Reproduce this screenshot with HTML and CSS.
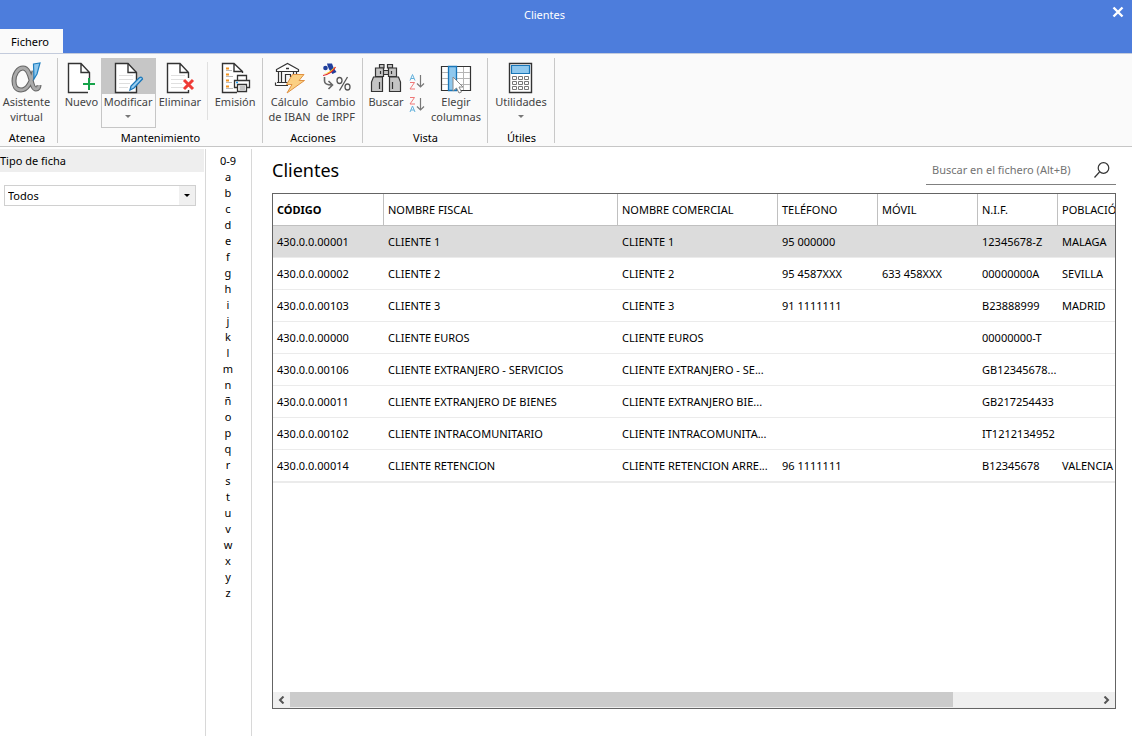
FILE: index.html
```html
<!DOCTYPE html>
<html lang="es">
<head>
<meta charset="utf-8">
<title>Clientes</title>
<link rel="stylesheet" href="styles.css">
</head>
<body>
<header class="titlebar">
  <h1 class="window-title">Clientes</h1>
  <button class="close" aria-label="Cerrar"><svg width="12" height="12" viewBox="0 0 12 12"><path d="M1.5 1.5l9 9M10.5 1.5l-9 9" stroke="#fff" stroke-width="2.4"/></svg></button>
  <button class="tab">Fichero</button>
</header>
<nav class="ribbon" aria-label="Cinta de opciones">
  <section class="group g-atenea">
    <div class="tools">
      <button class="tool">
        <svg width="32" height="32" viewBox="0 0 32 32"><path d="M23 9C20 22 16 28 10 28C5 28 3 24 3 19C3 12 7 6 12 6C21 6 19 27 25 27C27 27 28 25 28 23" fill="none" stroke="#666" stroke-width="5"/><path d="M23 9C20 22 16 28 10 28C5 28 3 24 3 19C3 12 7 6 12 6C21 6 19 27 25 27C27 27 28 25 28 23" fill="none" stroke="#aaa" stroke-width="2.8"/><path d="M22.500 2L29 1L26 12L23 17Z" fill="#8ec7ed" stroke="#1f7fc0" stroke-width="1.2"/></svg>
        <span>Asistente<br>virtual</span>
      </button>
    </div>
    <h2 class="group-name">Atenea</h2>
  </section>
  <section class="group g-mant">
    <div class="tools">
      <button class="tool w-nuevo">
        <svg width="32" height="32" viewBox="0 0 32 32"><path d="M24.500 20V10.500L16 1.500H3.500V30.500H23M16 1.500V10.500H24.500" fill="#fff" stroke="#333" stroke-width="1.400"/><path d="M24 16V28M18 22H30" stroke="#16a34a" stroke-width="2"/></svg>
        <span>Nuevo</span>
      </button>
      <button class="tool w-mod selected">
        <svg width="32" height="32" viewBox="0 0 32 32"><path d="M3.500 1.500H16L24.500 10.500V30.500H3.500Z" fill="#fff" stroke="#333" stroke-width="1.400"/><path d="M16 1.500V10.500H24.500" fill="none" stroke="#333" stroke-width="1.400"/><path d="M7 13.500H21M7 17.500H21M7 21.500H18M7 25.500H16" stroke="#dedede"/><path d="M18 28L19 24L27 16Q30 14 30.500 17L22 26Z" fill="#9ccff0" stroke="#1976b8" stroke-width="1.300"/></svg>
        <span>Modificar</span>
        <i class="caret"></i>
      </button>
      <button class="tool w-elim">
        <svg width="32" height="32" viewBox="0 0 32 32"><path d="M24.500 16V10.500L16 1.500H3.500V30.500H24.500V28M16 1.500V10.500H24.500" fill="#fff" stroke="#333" stroke-width="1.400"/><path d="M7 13.500H21M7 17.500H20M7 21.500H18M7 25.500H19" stroke="#e0e0e0"/><path d="M20 18L29 27M29 18L20 27" stroke="#ef3b36" stroke-width="3"/></svg>
        <span>Eliminar</span>
      </button>
      <button class="tool w-emi">
        <svg width="32" height="32" viewBox="0 0 32 32"><path d="M23.500 11V9.500L15 1.500H3.500V30.500H18M15 1.500V9.500H23.500" fill="#fff" stroke="#333" stroke-width="1.400"/><path d="M7 6.500H10M7 12.500H10M7 18.500H10M7 24.500H10" stroke="#f29422" stroke-width="1.800"/><path d="M7 8.500H13M7 14.500H14M7 20.500H13M7 26.500H14" stroke="#bbb"/><path d="M18.500 18V13.500H27.500V18M15.500 25.500V18.500H30.500V25.500Z" fill="#fff" stroke="#333" stroke-width="1.300"/><path d="M18.500 22.500H27.500V29.500H18.500Z" fill="#fff" stroke="#333" stroke-width="1.300"/><path d="M20.500 25H26M20.500 27H26" stroke="#888"/><path d="M17 20.500H19" stroke="#1d9bf0" stroke-width="1.500"/></svg>
        <span>Emisión</span>
      </button>
    </div>
    <h2 class="group-name">Mantenimiento</h2>
  </section>
  <section class="group g-acc">
    <div class="tools">
      <button class="tool w-calc">
        <svg width="32" height="32" viewBox="0 0 32 32"><path d="M2.500 9.500V7.500L13.500 1.500L24.500 7.500V9.500Z" fill="#fff" stroke="#333" stroke-width="1.200"/><path d="M12 6.500H15" stroke="#333" stroke-width="1.500"/><path d="M4.500 10V20M7.500 10V20M19.500 10V14M22.500 10V14M11.500 20V12.500H16.500V15" fill="none" stroke="#333" stroke-width="1.200"/><path d="M3 20.500H14M1.500 23.500H14M1.500 20.500V23.500" stroke="#333" stroke-width="1.200"/><path d="M18.500 12.500H30L25 18.500H30.500L13 31L18 22.500H12.500Z" fill="#fbd083" stroke="#e09243"/></svg>
        <span>Cálculo<br>de IBAN</span>
      </button>
      <button class="tool w-camb">
        <svg width="32" height="32" viewBox="0 0 32 32"><path d="M7 1.500H12Q13 6 16.500 10L12.500 12Q8 7 7 1.500Z" fill="#203f9c"/><circle cx="5.500" cy="6" r="2.300" fill="#203f9c"/><path d="M3.500 12Q8 11.500 15 4.500Q12.500 12 3.500 12Z" fill="#ffd71e"/><path d="M3 13.500Q11 12.500 15.500 5" fill="none" stroke="#e3262e" stroke-width="1.200"/><path d="M4.500 15V19Q4.500 23 12 23M8.500 19L12.500 23L8.500 27" fill="none" stroke="#666" stroke-width="1.600"/><ellipse cx="19.500" cy="18.500" rx="2.500" ry="3" fill="none" stroke="#555" stroke-width="1.300"/><ellipse cx="27.500" cy="25" rx="2.500" ry="3" fill="none" stroke="#555" stroke-width="1.300"/><path d="M27.500 15L19.500 28.500" stroke="#555" stroke-width="1.300"/></svg>
        <span>Cambio<br>de IRPF</span>
      </button>
    </div>
    <h2 class="group-name">Acciones</h2>
  </section>
  <section class="group g-vista">
    <div class="tools">
      <button class="tool w-busc">
        <svg width="32" height="32" viewBox="0 0 32 32"><g fill="#c4c4c4" stroke="#333" stroke-width="1.200"><path d="M13 8.500H19V12.500H13Z"/><path d="M9.500 2.500H14V6H9.500ZM17.500 2.500H22.500V6H17.500Z"/><path d="M5.500 6H13.500V14.500H5.500ZM18.500 6H26.500V14.500H18.500Z"/><path d="M3.500 15H12.500V29.500H1.500V20ZM19.500 15H28.500L30.500 20V29.500H19.500Z"/></g><path d="M9.500 20V27M22.500 20V27M10.500 9V12M21.500 9V12" stroke="#333" stroke-width="1.200"/></svg>
        <span>Buscar</span>
      </button>
      <div class="sorts">
        <button class="sort" aria-label="Orden ascendente"><svg width="16" height="16" viewBox="0 0 16 16" fill="none"><path d="M1 6.500L3.500 .5L6 6.500M2 4.500H5" stroke="#63b1dc"/><path d="M1 8.500H5.500L1 15H6" stroke="#ef7777"/><path d="M11.500 1V13M8 9.500L11.500 13L15 9.500" stroke="#777" stroke-width="1.200"/></svg></button>
        <button class="sort" aria-label="Orden descendente"><svg width="16" height="16" viewBox="0 0 16 16" fill="none"><path d="M1 15L3.500 9L6 15M2 13H5" stroke="#63b1dc"/><path d="M1 .5H5.500L1 7H6" stroke="#ef7777"/><path d="M11.500 1V13M8 9.500L11.500 13L15 9.500" stroke="#777" stroke-width="1.200"/></svg></button>
      </div>
      <button class="tool w-eleg">
        <svg width="32" height="32" viewBox="0 0 32 32"><path d="M1.500 4.500H30.500V28.500H1.500Z" fill="#fff" stroke="#333" stroke-width="1.200"/><path d="M2 10.500H30M2 16.500H30M2 22.500H30M23.500 5V28" stroke="#b5b5b5"/><path d="M8.500 4.500H16.500V28.500H8.500Z" fill="#8fc8ee" stroke="#1976b8" stroke-width="1.300"/><path d="M13 15V29L16.500 26L19 31L21.500 30L19 25H23Z" fill="#fff" stroke="#888"/></svg>
        <span>Elegir<br>columnas</span>
      </button>
    </div>
    <h2 class="group-name">Vista</h2>
  </section>
  <section class="group g-util">
    <div class="tools">
      <button class="tool">
        <svg width="32" height="32" viewBox="0 0 32 32"><path d="M4.500 1.500H26.500V30.500H4.500Z" fill="#fff" stroke="#333" stroke-width="1.400"/><path d="M6.500 3.500H24.500V11.500H6.500Z" fill="#8fc8ee" stroke="#1976b8" stroke-width="1.200"/><g fill="none" stroke="#777"><path d="M7.500 14.500h4v3h-4zM13.500 14.500h4v3h-4zM19.500 14.500h4v3h-4zM7.500 19.500h4v3h-4zM13.500 19.500h4v3h-4zM19.500 19.500h4v3h-4zM7.500 24.500h4v3h-4zM13.500 24.500h4v3h-4zM19.500 24.500h4v3h-4z"/></g></svg>
        <span>Utilidades</span>
        <i class="caret"></i>
      </button>
    </div>
    <h2 class="group-name">Útiles</h2>
  </section>
</nav>
<div class="workspace">
  <aside class="filter">
    <label class="filter-title" for="tipo">Tipo de ficha</label>
    <div class="select-box">
      <select id="tipo"><option>Todos</option></select>
      <span class="select-arrow"></span>
    </div>
  </aside>
  <nav class="index" aria-label="Índice alfabético">
    <a href="#">0-9</a><a href="#">a</a><a href="#">b</a><a href="#">c</a><a href="#">d</a><a href="#">e</a><a href="#">f</a><a href="#">g</a><a href="#">h</a><a href="#">i</a><a href="#">j</a><a href="#">k</a><a href="#">l</a><a href="#">m</a><a href="#">n</a><a href="#">ñ</a><a href="#">o</a><a href="#">p</a><a href="#">q</a><a href="#">r</a><a href="#">s</a><a href="#">t</a><a href="#">u</a><a href="#">v</a><a href="#">w</a><a href="#">x</a><a href="#">y</a><a href="#">z</a>
  </nav>
  <main class="content">
    <div class="content-head">
      <h2 class="page-title">Clientes</h2>
      <div class="search">
        <input type="text" aria-label="Buscar en el fichero" placeholder="Buscar en el fichero (Alt+B)">
        <button class="search-go" aria-label="Buscar"><svg width="16" height="16" viewBox="0 0 16 16" fill="none" stroke="#333" stroke-width="1.200"><circle cx="9.500" cy="6" r="5.300"/><path d="M5.500 10L.5 15.500"/></svg></button>
      </div>
    </div>
    <div class="grid">
      <div class="grid-view">
        <table>
          <colgroup><col class="c-cod"><col class="c-fis"><col class="c-com"><col class="c-tel"><col class="c-tel"><col class="c-nif"><col class="c-pob"></colgroup>
          <thead><tr><th class="sorted">CÓDIGO</th><th>NOMBRE FISCAL</th><th>NOMBRE COMERCIAL</th><th>TELÉFONO</th><th>MÓVIL</th><th>N.I.F.</th><th>POBLACIÓN</th></tr></thead>
          <tbody>
            <tr class="current"><td>430.0.0.00001</td><td>CLIENTE 1</td><td>CLIENTE 1</td><td>95 000000</td><td></td><td>12345678-Z</td><td>MALAGA</td></tr>
            <tr><td>430.0.0.00002</td><td>CLIENTE 2</td><td>CLIENTE 2</td><td>95 4587XXX</td><td>633 458XXX</td><td>00000000A</td><td>SEVILLA</td></tr>
            <tr><td>430.0.0.00103</td><td>CLIENTE 3</td><td>CLIENTE 3</td><td>91 1111111</td><td></td><td>B23888999</td><td>MADRID</td></tr>
            <tr><td>430.0.0.00000</td><td>CLIENTE EUROS</td><td>CLIENTE EUROS</td><td></td><td></td><td>00000000-T</td><td></td></tr>
            <tr><td>430.0.0.00106</td><td>CLIENTE EXTRANJERO - SERVICIOS</td><td>CLIENTE EXTRANJERO - SE...</td><td></td><td></td><td>GB12345678...</td><td></td></tr>
            <tr><td>430.0.0.00011</td><td>CLIENTE EXTRANJERO DE BIENES</td><td>CLIENTE EXTRANJERO BIE...</td><td></td><td></td><td>GB217254433</td><td></td></tr>
            <tr><td>430.0.0.00102</td><td>CLIENTE INTRACOMUNITARIO</td><td>CLIENTE INTRACOMUNITA...</td><td></td><td></td><td>IT1212134952</td><td></td></tr>
            <tr><td>430.0.0.00014</td><td>CLIENTE RETENCION</td><td>CLIENTE RETENCION ARRE...</td><td>96 1111111</td><td></td><td>B12345678</td><td>VALENCIA</td></tr>
          </tbody>
        </table>
      </div>
      <div class="hscroll">
        <button class="step" aria-label="Desplazar a la izquierda"><svg width="7" height="8" viewBox="0 0 7 8"><path d="M5.500 .5L2 4L5.500 7.500" fill="none" stroke="#555" stroke-width="2"/></svg></button>
        <div class="track"><div class="thumb"></div></div>
        <button class="step" aria-label="Desplazar a la derecha"><svg width="7" height="8" viewBox="0 0 7 8"><path d="M1.500 .5L5 4L1.500 7.500" fill="none" stroke="#555" stroke-width="2"/></svg></button>
      </div>
    </div>
  </main>
</div>
</body>
</html>
```
FILE: styles.css
```css
* { box-sizing: border-box; }
html, body { height: 100%; }
body {
  margin: 0;
  display: flex;
  flex-direction: column;
  overflow: hidden;
  background: #fff;
  color: #000;
  font: 11px/16px "Noto Sans", "Open Sans", sans-serif;
}
button, input, select { font: inherit; color: inherit; margin: 0; padding: 0; border: 0; background: none; border-radius: 0; }
h1, h2 { margin: 0; font-weight: 400; }
svg { display: block; flex: none; }
a { color: inherit; text-decoration: none; }

.titlebar {
  display: grid;
  grid-template-columns: 63px 1fr 63px;
  grid-template-rows: 29px 24px;
  background: #4d7ddc;
}
.window-title { grid-area: 1 / 2; font-size: 11px; line-height: 29px; text-align: center; color: #fff; padding-right: 43px; }
.close { grid-area: 1 / 3; justify-self: end; align-self: center; padding: 0 8px 6px; }
.tab { grid-area: 2 / 1; background: #fafafa; padding: 2px 3px 0 0; }

.ribbon {
  display: flex;
  height: 94px;
  flex: none;
  padding-top: 4px;
  background: #fafafa;
  border-top: 1px solid #c3cbdc;
  border-bottom: 1px solid #c6c6c6;
}
.group { display: flex; flex-direction: column; border-right: 1px solid #c8c8c8; margin-bottom: 3px; }
.tools { display: flex; justify-content: center; flex: 1; }
.group-name { font-size: 11px; line-height: 16px; text-align: center; margin-bottom: -3px; padding-left: 1px; }
.tool {
  display: flex;
  flex-direction: column;
  align-items: center;
  padding-top: 4px;
  color: #444;
  line-height: 15px;
  white-space: nowrap;
}
.g-atenea { width: 58px; }
.g-atenea .tools, .g-atenea .group-name { padding-right: 4px; }
.g-mant { width: 205px; }
.g-mant .tools { justify-content: flex-start; }
.g-acc { width: 100px; }
.g-vista { width: 125px; }
.g-vista .tools { justify-content: flex-start; }
.g-util { width: 67px; }
.w-nuevo { width: 43px; padding-left: 4px; }
.w-mod { width: 55px; }
.w-elim { width: 49px; }
.w-emi { width: 55px; border-left: 1px solid #e0e0e0; margin: 4px 0 10px 3px; padding-top: 0; }
.w-calc, .w-camb { width: 46px; }
.w-busc { width: 46px; }
.w-eleg { width: 62px; }
.selected { height: 70px; border: 1px solid #c6c6c6; background: linear-gradient(#c6c6c6 35px, #fafafa 35px); padding-top: 3px; }
.caret { border: 3px solid transparent; border-top-color: #777; border-bottom: 0; margin-top: 6px; }
.sorts { display: flex; flex-direction: column; gap: 7px; padding-top: 16px; width: 16px; }

.workspace { display: flex; flex: 1; min-height: 0; padding-top: 2px; }
.filter { flex: 0 0 205px; }
.filter-title { display: block; margin-right: 1px; height: 23px; line-height: 23px; background: #eee; }
.select-box { position: relative; margin: 13px 9px 0 4px; height: 21px; border: 1px solid #d0d0d0; }
.select-box select { appearance: none; width: 100%; height: 19px; padding-left: 3px; background: #fff; }
.select-arrow { position: absolute; right: 0; top: 0; width: 16px; height: 19px; background: #f0f0f0; pointer-events: none; display: grid; place-items: center; }
.select-arrow::after { content: ""; border: 3px solid transparent; border-top-color: #000; border-bottom: 0; }

.index {
  flex: 0 0 47px;
  display: flex;
  flex-direction: column;
  padding: 4px 1px 0 0;
  text-align: center;
  border: solid #d8d8d8;
  border-width: 0 1px;
}
.content { flex: 1; min-width: 0; display: flex; flex-direction: column; padding: 0 16px 27px 20px; }
.content-head { display: flex; justify-content: space-between; height: 44px; }
.page-title { font-size: 18px; line-height: 24px; padding-top: 9px; }
.search { display: flex; align-items: center; width: 190px; height: 30px; margin-top: 6px; padding: 0 6px; border-bottom: 1px solid #808080; }
.search input { flex: 1; min-width: 0; outline: 0; }
.search input::placeholder { color: #737373; opacity: 1; }

.grid { flex: 1; min-height: 0; display: flex; flex-direction: column; border: 1px solid #646464; }
.grid-view { flex: 1; overflow: hidden; }
table { table-layout: fixed; width: 934px; border-collapse: separate; border-spacing: 0; }
.c-cod { width: 111px; }
.c-fis { width: 234px; }
.c-com { width: 160px; }
.c-tel { width: 100px; }
.c-nif { width: 80px; }
.c-pob { width: 149px; }
th, td { height: 32px; padding: 0 4px; text-align: left; font-weight: 400; white-space: nowrap; overflow: hidden; border-bottom: 1px solid #ebebeb; }
th { border-right: 1px solid #c0c0c0; border-bottom-color: #c0c0c0; }
.sorted { font-weight: 700; }
.current td { background: #dcdcdc; }
tbody tr:last-child td { height: 33px; border-bottom-width: 2px; }
.hscroll { display: flex; height: 16px; background: #efefef; }
.step { width: 17px; display: grid; place-items: center; }
.track { flex: 1; }
.thumb { width: 82%; height: 15px; background: #cbcbcb; }
```
